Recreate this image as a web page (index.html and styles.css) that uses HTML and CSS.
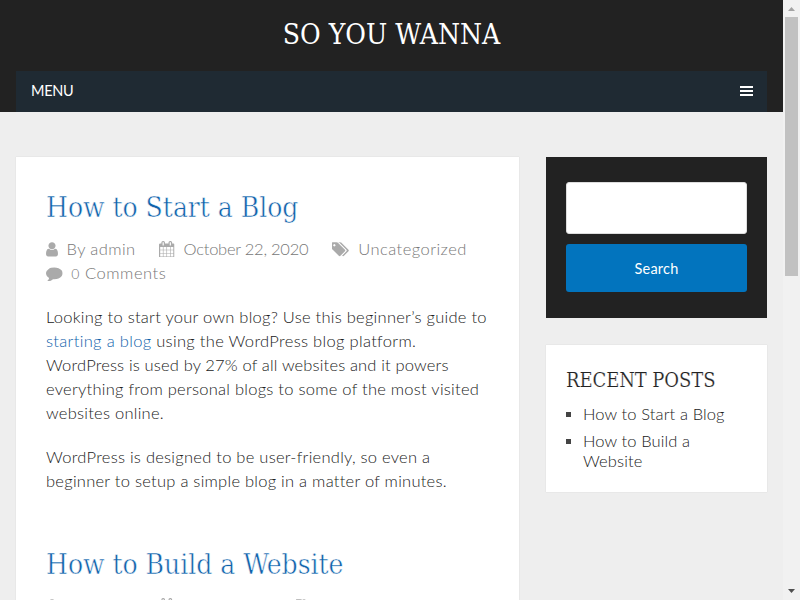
FILE: index.html
```html
<!DOCTYPE html>
<html lang="en">
<head>
    <meta charset="UTF-8">
    <meta name="viewport" content="width=device-width, initial-scale=1.0">
    <title>So You Wanna</title>
    <link rel="stylesheet" href="styles.css">
</head>
<body>
    <svg class="sprite">
        <symbol id="icon-user" viewBox="256 0 1280 1792"><path d="M1536 1399q0 109-62.5 187t-150.5 78h-854q-88 0-150.5-78t-62.5-187q0-85 8.5-160.5t31.5-152 58.5-131 94-89 134.5-34.5q131 128 313 128t313-128q76 0 134.5 34.5t94 89 58.5 131 31.5 152 8.5 160.5zm-256-887q0 159-112.5 271.5t-271.5 112.5-271.5-112.5-112.5-271.5 112.5-271.5 271.5-112.5 271.5 112.5 112.5 271.5z"/></symbol>
        <symbol id="icon-calendar" viewBox="64 0 1664 1792"><path d="M192 1664h288v-288h-288v288zm352 0h320v-288h-320v288zm-352-352h288v-320h-288v320zm352 0h320v-320h-320v320zm-352-384h288v-288h-288v288zm736 736h320v-288h-320v288zm-384-736h320v-288h-320v288zm768 736h288v-288h-288v288zm-384-352h320v-320h-320v320zm-352-864v-288q0-13-9.5-22.5t-22.5-9.5h-64q-13 0-22.5 9.5t-9.5 22.5v288q0 13 9.5 22.5t22.5 9.5h64q13 0 22.5-9.5t9.5-22.5zm736 864h288v-320h-288v320zm-384-384h320v-288h-320v288zm384 0h288v-288h-288v288zm32-480v-288q0-13-9.5-22.5t-22.5-9.5h-64q-13 0-22.5 9.5t-9.5 22.5v288q0 13 9.5 22.5t22.5 9.5h64q13 0 22.5-9.5t9.5-22.5zm384-64v1280q0 52-38 90t-90 38h-1408q-52 0-90-38t-38-90v-1280q0-52 38-90t90-38h128v-96q0-66 47-113t113-47h64q66 0 113 47t47 113v96h384v-96q0-66 47-113t113-47h64q66 0 113 47t47 113v96h128q52 0 90 38t38 90z"/></symbol>
        <symbol id="icon-tags" viewBox="0 0 1856 1792"><path d="M384 448q0-53-37.5-90.5t-90.5-37.5-90.5 37.5-37.5 90.5 37.5 90.5 90.5 37.5 90.5-37.5 37.5-90.5zm1067 576q0 53-37 90l-491 492q-39 37-91 37-53 0-90-37l-715-716q-38-37-64.5-101t-26.5-117v-416q0-52 38-90t90-38h416q53 0 117 26.5t102 64.5l715 714q37 39 37 91zm384 0q0 53-37 90l-491 492q-39 37-91 37-36 0-59-14t-53-45l470-470q37-37 37-90 0-52-37-91l-715-714q-38-38-102-64.5t-117-26.5h224q53 0 117 26.5t102 64.5l715 714q37 39 37 91z"/></symbol>
        <symbol id="icon-comment" viewBox="0 0 1792 1792"><path d="M1792 896q0 174-120 321.5t-326 233-450 85.5q-70 0-145-8-198 175-460 242-49 14-114 22-17 2-30.5-9t-17.5-29v-1q-3-4-.5-12t2-10 4.5-9.5l6-9 7-8.5 8-9q7-8 31-34.5t34.5-38 31-39.5 32.5-51 27-59 26-76q-157-89-247.5-220t-90.5-281q0-130 71-248.5t191-204.5 286-136.5 348-50.5q244 0 450 85.5t326 233 120 321.5z"/></symbol>
    </svg>

    <div class="page">
        <header class="site-header">
            <h1 class="logo">SO YOU WANNA</h1>
            <nav class="menu">
                <span>MENU</span>
                <svg class="bars" width="13" height="10" viewBox="0 0 13 10"><path d="M0 0h13v2H0zM0 4h13v2H0zM0 8h13v2H0z"/></svg>
            </nav>
        </header>

        <div class="content">
            <main class="posts">
                <article class="post">
                    <h2 class="title">How to Start a Blog</h2>
                    <div class="post-info">
                        <span class="info author"><svg class="icon user"><use href="#icon-user"/></svg>By admin</span>
                        <span class="info date"><svg class="icon calendar"><use href="#icon-calendar"/></svg>October 22, 2020</span>
                        <span class="info category"><svg class="icon tags"><use href="#icon-tags"/></svg>Uncategorized</span>
                        <span class="info comments"><svg class="icon comment"><use href="#icon-comment"/></svg><span class="count">0</span>&nbsp;Comments</span>
                    </div>
                    <p>Looking to start your own blog? Use this beginner’s guide to<br><span class="wide"><a href="#">starting a blog</a> using the WordPress blog platform.</span><br><span class="tight">WordPress is used by 27% of all websites and it powers</span><br>everything from personal blogs to some of the most visited<br>websites online.</p>
                    <p>WordPress is designed to be user-friendly, so even a<br>beginner to setup a simple blog in a matter of minutes.</p>
                </article>
                <article class="post">
                    <h2 class="title">How to Build a Website</h2>
                    <div class="post-info">
                        <span class="info author"><svg class="icon user"><use href="#icon-user"/></svg>By admin</span>
                        <span class="info date"><svg class="icon calendar"><use href="#icon-calendar"/></svg>May 8, 2020</span>
                        <span class="info category"><svg class="icon tags"><use href="#icon-tags"/></svg>Uncategorized</span>
                    </div>
                </article>
            </main>

            <aside class="sidebar">
                <form class="search">
                    <input type="text" class="search-field">
                    <button type="button" class="search-button">Search</button>
                </form>
                <div class="widget">
                    <h3>RECENT POSTS</h3>
                    <ul>
                        <li>How to Start a Blog</li>
                        <li>How to Build a Website</li>
                    </ul>
                </div>
            </aside>
        </div>
    </div>

    <div class="scrollbar">
        <svg width="17" height="17"><path d="M5 11h7l-3.500-4z" fill="#a3a3a3"/></svg>
        <div class="thumb"></div>
        <svg class="down" width="17" height="17"><path d="M5 6h7l-3.500 4z" fill="#505050"/></svg>
    </div>
</body>
</html>
```
FILE: styles.css
```css
* {
    box-sizing: border-box;
}
body {
    display: flex;
    width: 800px;
    height: 600px;
    margin: 0;
    overflow: hidden;
    background: #eee;
    color: #222;
    font: 300 16.5px/24px Lato, "Liberation Sans", sans-serif;
    letter-spacing: 0.26px;
}
.sprite {
    display: none;
}
.page {
    width: 783px;
    height: 600px;
    overflow: hidden;
}
h1, h2, h3 {
    margin: 0;
    font-family: "Roboto Slab", "DejaVu Serif Condensed", "DejaVu Serif", serif;
    font-stretch: condensed;
    font-weight: 400;
    letter-spacing: 0;
}
.site-header {
    height: 112px;
    padding: 0 16px;
    background: #222;
}
.logo {
    height: 71px;
    color: #fff;
    font-size: 28px;
    line-height: 70px;
    text-align: center;
}
.menu {
    display: flex;
    align-items: center;
    justify-content: space-between;
    height: 41px;
    padding: 0 14px 2px 15px;
    background: #1f2a33;
    color: #fff;
    font-size: 14.5px;
    font-weight: 400;
    letter-spacing: -0.3px;
}
.bars {
    fill: #fff;
}
.content {
    display: flex;
    align-items: flex-start;
    justify-content: space-between;
    padding: 45px 16px 0;
}
.posts {
    width: 503px;
    height: 500px;
    padding: 31px 30px;
    background: #fff;
    box-shadow: 0 0 1px rgba(0, 0, 0, 0.15);
}
.post {
    margin-bottom: 52px;
}
.title {
    color: #0f62ab;
    font-size: 28px;
    line-height: 40px;
    letter-spacing: -0.05px;
    /* thins the letters down to a light weight */
    -webkit-text-stroke: 0.5px #fff;
}
.post-info {
    display: flex;
    flex-wrap: wrap;
    margin: 9px -20px 20px 0;
    color: #777;
}
.info {
    display: flex;
    align-items: center;
    height: 24px;
    margin-right: 24px;
    white-space: nowrap;
}
.author {
    letter-spacing: 0.4px;
}
.date {
    letter-spacing: -0.25px;
}
.category {
    letter-spacing: 0.45px;
}
.comments {
    letter-spacing: 0.55px;
}
.icon {
    height: 16.7px;
    margin-right: 8.6px;
    fill: #aaa;
}
.user {
    width: 12px;
}
.calendar {
    width: 15.5px;
}
.tags {
    width: 17px;
    margin-right: 9px;
}
.comment {
    width: 16.7px;
}
.count {
    padding-top: 2px;
    font-size: 14px;
}
p {
    margin: 0 0 20px;
    white-space: nowrap;
}
.tight {
    letter-spacing: 0.16px;
}
.wide {
    letter-spacing: 0.32px;
}
a {
    color: #0f62ab;
    text-decoration: none;
}
.sidebar {
    width: 221px;
}
.search {
    display: flex;
    flex-direction: column;
    gap: 10px;
    height: 161px;
    margin-bottom: 27px;
    padding: 25px 20px;
    background: #222;
}
.search-field {
    width: 100%;
    height: 52px;
    border: 1px solid #ddd;
    border-radius: 3px;
    background: #fff;
}
.search-button {
    height: 48px;
    padding: 0;
    border: none;
    border-radius: 3px;
    background: #0274be;
    color: #fff;
    font: 400 14.5px Lato, "Liberation Sans", sans-serif;
    letter-spacing: 0.2px;
}
.widget {
    height: 147px;
    padding: 20px;
    background: #fff;
    box-shadow: 0 0 1px rgba(0, 0, 0, 0.15);
}
.widget h3 {
    margin-bottom: 9px;
    color: #222;
    font-size: 20px;
    line-height: 30px;
    letter-spacing: -0.1px;
    -webkit-text-stroke: 0.2px #fff;
}
ul {
    margin: 0;
    padding: 0;
    list-style: none;
}
li {
    position: relative;
    margin-bottom: 7px;
    padding: 0 20px 0 17px;
    line-height: 20px;
    letter-spacing: 0.12px;
}
li::before {
    content: "";
    position: absolute;
    left: 0;
    top: 8px;
    width: 5px;
    height: 5px;
    background: #444;
}
.scrollbar {
    display: flex;
    flex-direction: column;
    width: 17px;
    height: 600px;
    background: #f1f1f1;
}
.thumb {
    width: 13px;
    height: 259px;
    margin: 0 2px;
    background: #c1c1c1;
}
.down {
    margin-top: auto;
}
```
